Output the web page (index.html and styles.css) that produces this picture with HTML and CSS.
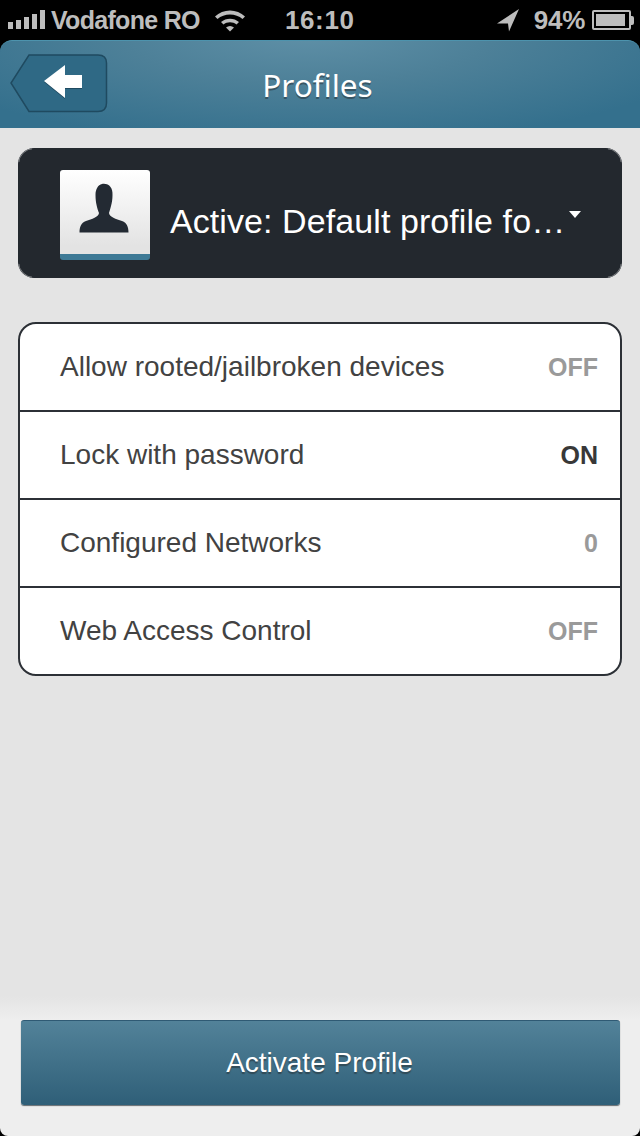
FILE: index.html
```html
<!DOCTYPE html>
<html lang="en">
<head>
<meta charset="utf-8">
<title>Profiles</title>
<link rel="stylesheet" href="styles.css">
</head>
<body>
<div class="screen">
  <div class="status">
    <div class="status-left">
      <div class="signal"><i class="b1"></i><i class="b2"></i><i class="b3"></i><i class="b4"></i><i class="b5"></i></div>
      <span class="carrier">Vodafone RO</span>
      <svg class="wifi" width="32" height="24" viewBox="0 0 32 24"><path d="M1 8.500C9 .5 23 .5 31 8.500L28.500 11C22 5 10 5 3.500 11Z M7 14C12 9.500 20 9.500 25 14L22.500 16.500C19 13.500 13 13.500 9.500 16.500Z M12 19.500C14.500 17.500 17.500 17.500 20 19.500L16 23.500Z" fill="#bdbdbd"/></svg>
    </div>
    <span class="clock">16:10</span>
    <div class="status-right">
      <svg class="arrow" width="24" height="24" viewBox="0 0 24 24"><path d="M23 1L1 15.500L12 15.500L13 23.500Z" fill="#bdbdbd"/></svg>
      <span class="pct">94%</span>
      <div class="battery"><div class="cell"><div class="charge"></div></div><div class="nub"></div></div>
    </div>
  </div>
  <header class="nav">
    <button class="back" aria-label="Back">
      <svg width="98" height="60" viewBox="0 0 98 60"><path class="back-shape" d="M19 1H88Q96.500 1 96.500 9V49Q96.500 57.500 88 57.500H19L1 29Z"/><path class="back-arrow" d="M34 27L55 11V21H72V34H55V44Z"/></svg>
    </button>
    <h1 class="title">Profiles</h1>
  </header>
  <main class="content">
    <section class="profile">
      <div class="avatar">
        <svg width="90" height="84" viewBox="0 0 90 84"><path d="M42 14C49 13 53 18 52.500 25C52.500 33 50 39 49 43C49.500 47 56 49 62 51C67 53 68.500 57 68.500 62.500H19.500C19.500 57 21 53 26 51C32 49 38.500 47 39 43C37.500 39 35.500 33 35.500 25C35.500 19 38 15 42 14Z" fill="#232a33"/></svg>
      </div>
      <span class="profile-name">Active: Default profile fo…</span>
      <span class="caret"></span>
    </section>
    <section class="settings">
      <div class="row"><span class="label">Allow rooted/jailbroken devices</span><span class="value muted">OFF</span></div>
      <div class="row"><span class="label">Lock with password</span><span class="value strong">ON</span></div>
      <div class="row"><span class="label">Configured Networks</span><span class="value muted">0</span></div>
      <div class="row"><span class="label">Web Access Control</span><span class="value muted">OFF</span></div>
    </section>
  </main>
  <footer class="footer">
    <button class="activate">Activate Profile</button>
  </footer>
</div>
</body>
</html>
```
FILE: styles.css
```css
* { box-sizing: border-box; }
html, body { margin: 0; height: 100%; background: #000; }
body { font-family: "Liberation Sans", Arial, sans-serif; }
.screen { width: 640px; height: 1136px; display: flex; flex-direction: column; background: #000; overflow: hidden; }
.status { height: 40px; flex: none; display: flex; align-items: center; justify-content: space-between; color: #bdbdbd; font-weight: 700; position: relative; padding: 0 6px 0 8px; }
.status-left, .status-right { display: flex; align-items: center; }
.signal { display: flex; align-items: flex-end; gap: 3px; height: 19px; margin-right: 6px; margin-top: -1px; }
.signal i { display: block; width: 5px; background: #bdbdbd; }
.b1 { height: 7px; } .b2 { height: 9px; } .b3 { height: 12px; } .b4 { height: 15px; } .b5 { height: 19px; }
.carrier { font-size: 25px; letter-spacing: -.7px; }
.wifi { margin-left: 14px; }
.clock { position: absolute; left: 285px; top: 4px; font-size: 26px; line-height: 32px; font-weight: 700; letter-spacing: .6px; }
.arrow { margin-right: 14px; margin-left: -3px; }
.pct { font-size: 26px; letter-spacing: -.3px; }
.battery { display: flex; align-items: center; margin-left: 7px; }
.cell { width: 39px; height: 20px; border: 2px solid #bdbdbd; border-radius: 2px; padding: 2px; }
.charge { height: 100%; width: 92%; background: #bdbdbd; }
.nub { width: 3px; height: 9px; background: #bdbdbd; border-radius: 0 2px 2px 0; }
.nav { height: 88px; flex: none; display: flex; align-items: center; justify-content: center; position: relative; border-radius: 12px 12px 0 0; border-top: 1px solid #4d93ad; background: radial-gradient(ellipse 420px 110px at 48% -8%, #5f90a7 0%, #4d8098 45%, rgba(52,112,141,0) 100%), #34708d; }
.back { position: absolute; left: 10px; top: 13px; width: 98px; height: 60px; padding: 0; border: 0; background: none; }
.back svg { display: block; }
.back-shape { fill: #2f6985; stroke: #1f4a60; stroke-width: 1.500; }
.back-arrow { fill: #fff; filter: drop-shadow(0 1px 0 #1f4a60); }
.title { margin: 0 0 0 -5px; font-family: "Noto Sans", sans-serif; font-weight: 400; font-size: 31.500px; line-height: 40px; color: #fff; text-shadow: 0 2px 0 rgba(40,50,55,.55); }
.content { flex: 1; background: #e4e4e4; padding: 20px 18px 0; display: flex; flex-direction: column; gap: 44px; }
.profile { height: 130px; background: #23282e; border-radius: 16px; display: flex; align-items: center; padding: 4px 0 0 42px; position: relative; }
.profile::after { content: ""; position: absolute; inset: 0; border: 1px solid rgba(255,255,255,.4); border-radius: 16px; -webkit-mask: linear-gradient(#000,#000) 0 0/14px 14px no-repeat, linear-gradient(#000,#000) 100% 0/14px 14px no-repeat, linear-gradient(#000,#000) 0 100%/14px 14px no-repeat, linear-gradient(#000,#000) 100% 100%/14px 14px no-repeat; mask: linear-gradient(#000,#000) 0 0/14px 14px no-repeat, linear-gradient(#000,#000) 100% 0/14px 14px no-repeat, linear-gradient(#000,#000) 0 100%/14px 14px no-repeat, linear-gradient(#000,#000) 100% 100%/14px 14px no-repeat; }
.avatar { width: 90px; height: 90px; border-radius: 3px; overflow: hidden; background: linear-gradient(#fff, #e3e3e3 90%); border-bottom: 6px solid #3d7995; flex: none; }
.avatar svg { display: block; }
.profile-name { color: #fff; font-size: 34px; letter-spacing: .08px; margin-left: 20px; white-space: nowrap; margin-top: 12px; }
.caret { position: absolute; left: 551px; top: 63px; width: 0; height: 0; border-left: 6.500px solid transparent; border-right: 6.500px solid transparent; border-top: 7px solid #fff; }
.settings { background: #fff; border: 2px solid #2c3036; border-radius: 18px; overflow: hidden; }
.row { height: 88px; display: flex; align-items: center; justify-content: space-between; padding: 0 22px 0 40px; border-bottom: 2px solid #2c3036; }
.row:last-child { border-bottom: 0; height: 86px; }
.label { font-size: 28px; color: #424242; }
.value { font-size: 25px; font-weight: 700; }
.muted { color: #9a9a9a; }
.strong { color: #383838; }
.footer { height: 140px; flex: none; border-radius: 0 0 8px 8px; background: linear-gradient(#e4e4e4, #eeeeee 24px); padding: 24px 20px 0 21px; }
.activate { display: block; width: 599px; height: 85px; padding: 0 2px 0 0; border: 0; border-top: 1px solid #2f5a74; border-radius: 3px; background: linear-gradient(#528299, #2f5f78); color: #fff; font-family: "Liberation Sans", Arial, sans-serif; font-size: 28px; text-shadow: 0 2px 1px rgba(40,50,55,.6); box-shadow: 0 1px 1px rgba(40,50,55,.7); }
```
